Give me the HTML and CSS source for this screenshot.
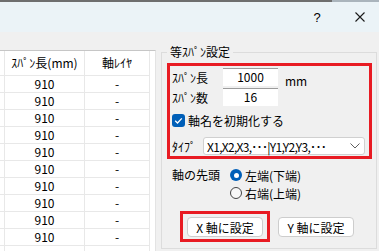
FILE: index.html
```html
<!DOCTYPE html>
<html lang="ja">
<head>
    <meta charset="UTF-8">
    <title>等スパン設定</title>
<link rel="stylesheet" href="styles.css">
</head>
<body>
    <div class="titlebar">
        <span class="help">?</span>
        <svg class="close" width="10" height="10" viewBox="0 0 10 10">
            <path d="M0.5 0.5 L9.5 9.5 M9.5 0.5 L0.5 9.5" stroke="#1a1a1a" stroke-width="1.1" fill="none"/>
        </svg>
    </div>

    <div class="main">
        <div class="grid">
            <table>
                <thead>
                    <tr><th class="rowhead"></th><th class="col-len">ｽﾊﾟﾝ長(mm)</th><th class="col-layer">軸ﾚｲﾔ</th></tr>
                </thead>
                <tbody>
                    <tr><td></td><td>910</td><td>-</td></tr>
                    <tr><td></td><td>910</td><td>-</td></tr>
                    <tr><td></td><td>910</td><td>-</td></tr>
                    <tr><td></td><td>910</td><td>-</td></tr>
                    <tr><td></td><td>910</td><td>-</td></tr>
                    <tr><td></td><td>910</td><td>-</td></tr>
                    <tr><td></td><td>910</td><td>-</td></tr>
                    <tr><td></td><td>910</td><td>-</td></tr>
                    <tr><td></td><td>910</td><td>-</td></tr>
                    <tr><td></td><td>910</td><td>-</td></tr>
                    <tr><td></td><td></td><td></td></tr>
                </tbody>
            </table>
        </div>

        <fieldset class="group">
            <legend>等ｽﾊﾟﾝ設定</legend>

            <div class="spec-box">
                <div class="spec-row">
                    <span class="spec-label">ｽﾊﾟﾝ長</span>
                    <input class="num-input" type="text" value="1000">
                    <span class="unit">mm</span>
                </div>
                <div class="spec-row">
                    <span class="spec-label">ｽﾊﾟﾝ数</span>
                    <input class="num-input" type="text" value="16">
                </div>
                <div class="check-row">
                    <span class="checkbox">
                        <svg width="13" height="13" viewBox="0 0 13 13">
                            <path d="M3.2 6.8 L5.5 9 L9.8 4.4" stroke="#fff" stroke-width="1.3" fill="none"/>
                        </svg>
                    </span>
                    <span>軸名を初期化する</span>
                </div>
                <div class="type-row">
                    <span class="type-label">ﾀｲﾌﾟ</span>
                    <div class="select">
                        <span class="select-text">X1,X2,X3,･･･|Y1,Y2,Y3,･･･</span>
                        <svg width="10" height="6" viewBox="0 0 10 6">
                            <path d="M0.5 0.5 L5 5 L9.5 0.5" stroke="#5f5f5f" stroke-width="1" fill="none"/>
                        </svg>
                    </div>
                </div>
            </div>

            <div class="lead">
                <span class="lead-label">軸の先頭</span>
                <div class="radios">
                    <div class="radio-row"><span class="radio on"></span><span>左端(下端)</span></div>
                    <div class="radio-row"><span class="radio off"></span><span>右端(上端)</span></div>
                </div>
            </div>

            <div class="buttons">
                <div class="btn-mark">
                    <button class="btn" type="button">X 軸に設定</button>
                </div>
                <button class="btn btn-y" type="button">Y 軸に設定</button>
            </div>
        </fieldset>
    </div>
</body>
</html>
```

FILE: styles.css
```css
:root {
    --bg-color: #f0f0f0;
    --line-color: #e8e8e8;
    --mark-red: #e81b23;
    --accent-blue: #005fb8;
}
* {
    box-sizing: border-box;
}
body {
    margin: 0;
    width: 379px;
    height: 251px;
    overflow: hidden;
    background-color: var(--bg-color);
    font-family: "Noto Sans CJK JP", "Liberation Sans", sans-serif;
    font-size: 12px;
    color: #000;
}

.titlebar {
    height: 32px;
    border-top: 2px solid #707070;
    border-image: linear-gradient(to right, #6e6e6e 331px, #aab4bc 331px) 1;
    background-color: #ebf3f7;
    display: flex;
    align-items: center;
    justify-content: flex-end;
}
.help {
    width: 8px;
    margin-right: 34px;
    text-align: center;
    font-size: 13px;
    font-family: "Liberation Sans", sans-serif;
}
.close {
    margin-right: 14px;
}

.main {
    display: flex;
    align-items: flex-start;
}

.grid {
    width: 156px;
    height: 201px;
    margin-top: 18px;
    overflow: hidden;
    background-color: #fff;
    border-top: 1px solid #c6c6c6;
    border-right: 1px solid #e3e3e3;
}
.grid table {
    border-spacing: 0;
    table-layout: fixed;
    width: 150px;
}
.grid th,
.grid td {
    box-sizing: content-box;
    padding: 0;
    border-right: 1px solid var(--line-color);
    border-bottom: 1px solid var(--line-color);
    text-align: center;
    font-weight: normal;
    white-space: nowrap;
}
.grid th {
    height: 24px;
    line-height: 24px;
}
.grid td {
    height: 16px;
    line-height: 16px;
}
.rowhead { width: 4px; }
.col-len { width: 79px; }
.col-layer { width: 64px; }

.group {
    width: 216px;
    min-width: 0;
    margin: 13px 0 0 5px;
    padding: 4px 4px 6px 5px;
    border: 1px solid #dcdcdc;
}
.group legend {
    padding: 0 3px;
    line-height: 14px;
}

.spec-box {
    border: 3px solid var(--mark-red);
    padding: 2px 0 1px 2px;
}
.spec-row {
    display: flex;
    align-items: center;
    height: 18px;
}
.spec-row + .spec-row {
    margin-top: 2px;
}
.spec-label {
    width: 51px;
}
.num-input {
    width: 55px;
    height: 18px;
    padding: 0 0 2px;
    border: 0;
    border-top: 1px solid #9c9c9c;
    background-color: #fff;
    font: inherit;
    text-align: center;
}
.unit {
    margin-left: 7px;
    padding-top: 6px;
}

.check-row {
    display: flex;
    align-items: center;
    gap: 3px;
    height: 15px;
    margin-top: 7px;
}
.checkbox {
    width: 13px;
    height: 13px;
    border-radius: 3px;
    background-color: var(--accent-blue);
    display: flex;
}

.type-row {
    display: flex;
    align-items: center;
    height: 18px;
    margin-top: 9px;
}
.type-label {
    width: 31px;
}
.select {
    width: 162px;
    height: 18px;
    padding: 0 4px 0 3px;
    border: 1px solid #d0d0d0;
    border-radius: 3px;
    background-color: #fff;
    display: flex;
    align-items: center;
    justify-content: space-between;
}
.select-text {
    letter-spacing: -0.7px;
    white-space: nowrap;
}

.lead {
    display: flex;
    margin-top: 7px;
}
.lead-label {
    width: 63px;
    padding-left: 5px;
    line-height: 18px;
}
.radio-row {
    display: flex;
    align-items: center;
    gap: 3px;
    height: 18px;
}
.radio {
    width: 12px;
    height: 12px;
    border-radius: 50%;
}
.radio.on {
    background-color: var(--accent-blue);
    display: flex;
    align-items: center;
    justify-content: center;
}
.radio.on::after {
    content: "";
    width: 5px;
    height: 5px;
    border-radius: 50%;
    background-color: #fff;
}
.radio.off {
    border: 1px solid #444;
    background-color: #f7f7f7;
}

.buttons {
    display: flex;
    align-items: flex-start;
    margin-top: 9px;
}
.btn-mark {
    margin-left: 13px;
    padding: 3px 4px 2px;
    border: 3px solid var(--mark-red);
}
.btn {
    width: 76px;
    height: 20px;
    padding: 0;
    border: 1px solid #cdcdcd;
    border-radius: 4px;
    background-color: #fff;
    font: inherit;
    color: #000;
    display: flex;
    align-items: center;
    justify-content: center;
}
.btn-y {
    margin: 6px 0 0 8px;
}
```
